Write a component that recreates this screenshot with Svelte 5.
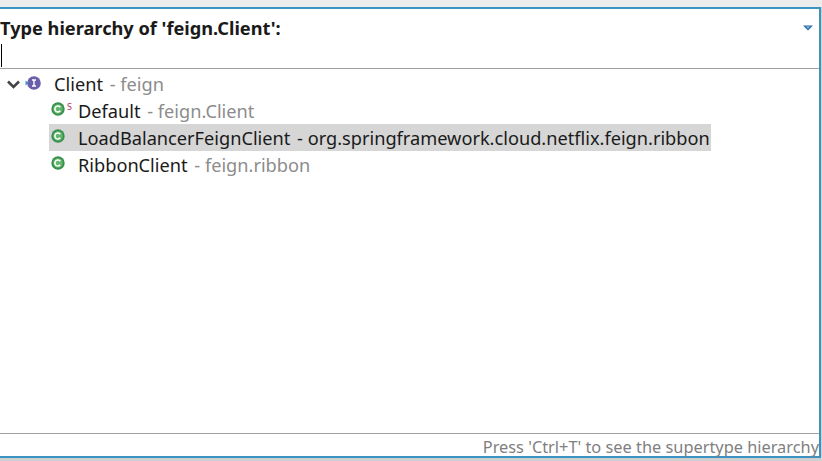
<script lang="ts">
	interface Row {
		name: string;
		pkg: string;
		selected?: boolean;
		isStatic?: boolean;
	}

	const rows: Row[] = [
		{ name: 'Default', pkg: 'feign.Client', isStatic: true },
		{ name: 'LoadBalancerFeignClient', pkg: 'org.springframework.cloud.netflix.feign.ribbon', selected: true },
		{ name: 'RibbonClient', pkg: 'feign.ribbon' }
	];
</script>

<div class="screen">
	<div class="popup">
		<header class="head">
			<span class="title">Type hierarchy of 'feign.Client':</span>
			<svg class="menu" width="10" height="6" viewBox="0 0 10 6">
				<path d="M0 0.5h10L5 5.5z" fill="#2a6ea8" />
				<path d="M3 1.5h4L5 3.5z" fill="#8fc0e6" />
			</svg>
		</header>
		<div class="filter"><span class="caret"></span></div>
		<div class="tree">
			<div class="root">
				<svg class="chevron" width="13" height="9" viewBox="0 0 13 9">
					<path d="M1 1.5l5.5 5.5 5.5-5.5" fill="none" stroke="#444" stroke-width="2.6" />
				</svg>
				<svg class="iface" width="16" height="14" viewBox="0 0 16 14">
					<circle cx="9" cy="7" r="6.8" fill="#6a5fa8" />
					<path d="M0.5 4.5l3 2.5-3 2.5z" fill="#3f8fd0" />
					<path d="M7 4h4M7 10h4M9 4v6" stroke="#fff" stroke-width="1.4" fill="none" />
				</svg>
				<span class="name">Client</span><span class="pkg">&nbsp;- feign</span>
			</div>
			{#each rows as row}
				<div class="row">
					<div class="item" class:selected={row.selected}>
						<span class="icon">
							<svg width="14" height="14" viewBox="0 0 14 14">
								<circle cx="7" cy="7" r="6.7" fill="#3a914d" />
								<circle cx="7" cy="7" r="4.8" fill="#62b56d" />
								<path d="M9.3 5.2A3 3 0 1 0 9.3 8.8" fill="none" stroke="#fff" stroke-width="1.6" />
							</svg>
							{#if row.isStatic}<span class="s">S</span>{/if}
						</span>
						<span class="name">{row.name}</span><span class="pkg" class:dark={row.selected}>&nbsp;- {row.pkg}</span>
					</div>
				</div>
			{/each}
		</div>
		<footer class="status">Press 'Ctrl+T' to see the supertype hierarchy</footer>
	</div>
</div>

<style>
	:global(body) {
		margin: 0;
		background: #d4d6d5;
	}

	.screen {
		width: 822px;
		height: 461px;
		padding-top: 7px;
		box-sizing: border-box;
		background: linear-gradient(#ececec 0 7px, #cfd1d0 7px);
		overflow: hidden;
		font-family: 'Noto Sans', 'Open Sans', sans-serif;
		font-size: 18.2px;
		color: #1a1a1a;
	}

	.popup {
		width: 821px;
		height: 451px;
		box-sizing: border-box;
		background: #fff;
		border-top: 2px solid #3b93c4;
		border-right: 2px solid #3b93c4;
		border-bottom: 2px solid #3b93c4;
		display: flex;
		flex-direction: column;
	}

	.head {
		height: 35px;
		flex-shrink: 0;
		display: flex;
		align-items: center;
		justify-content: space-between;
		padding: 2px 6px 0 0;
		box-sizing: border-box;
	}

	.title {
		font-weight: 700;
		white-space: nowrap;
	}

	.filter {
		height: 24px;
		flex-shrink: 0;
		border-bottom: 1px solid #a0a0a0;
	}

	.caret {
		display: block;
		width: 1px;
		margin-left: 1px;
		height: 23px;
		background: #000;
	}

	.tree {
		flex: 1;
		padding-top: 2px;
	}

	.root {
		height: 26px;
		display: flex;
		align-items: center;
		padding-left: 7px;
		white-space: nowrap;
	}

	.chevron {
		margin-right: 5px;
		margin-top: 1px;
	}

	.iface {
		margin-right: 13px;
		margin-top: -3px;
	}

	.row {
		height: 26.9px;
		padding-left: 49px;
	}

	.item {
		display: inline-flex;
		align-items: center;
		height: 100%;
		white-space: nowrap;
		padding-right: 1px;
	}

	.item.selected {
		background: #d6d6d6;
	}

	.icon {
		position: relative;
		width: 29px;
		padding-left: 2px;
		box-sizing: border-box;
		display: flex;
		margin-top: -4px;
	}

	.s {
		position: absolute;
		left: 18px;
		top: -2px;
		font-size: 9px;
		color: #b0305a;
	}

	.pkg {
		color: #8c8c8c;
		margin-left: 2px;
	}

	.pkg.dark {
		color: #1a1a1a;
	}

	.status {
		height: 22px;
		flex-shrink: 0;
		border-top: 1px solid #a0a0a0;
		font-size: 16.35px;
		line-height: 26px;
		color: #7f7f7f;
		text-align: right;
		white-space: nowrap;
	}
</style>
